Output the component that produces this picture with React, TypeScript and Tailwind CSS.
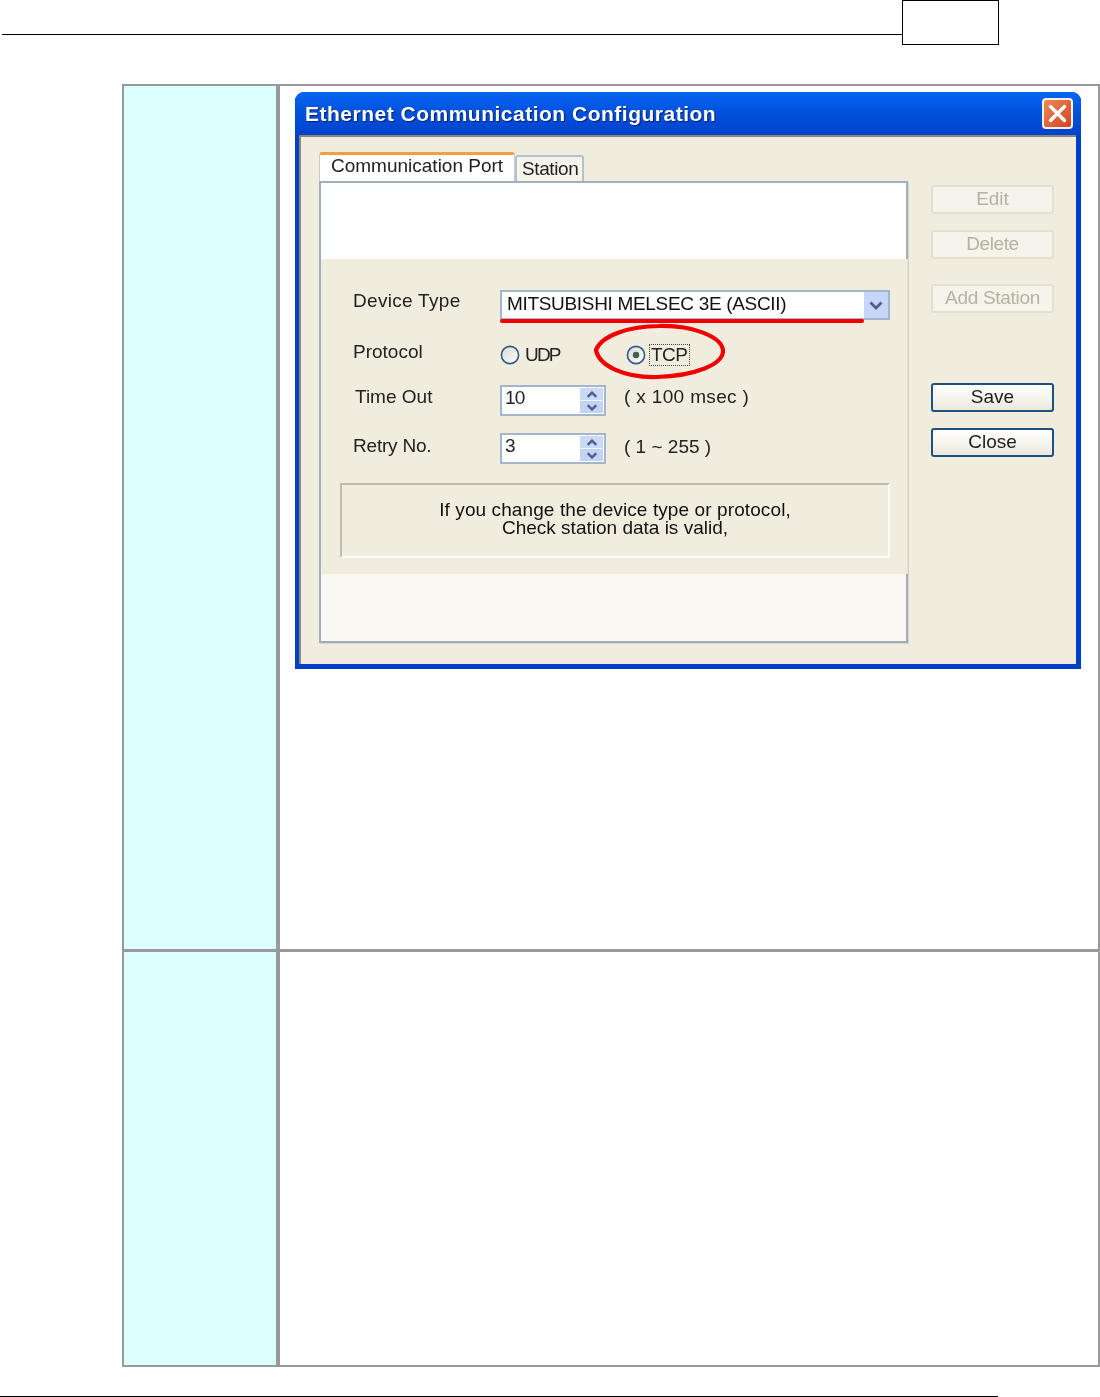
const Chevron = ({ up = false, small = false }: { up?: boolean; small?: boolean }) => (
  <svg
    width={small ? 12 : 14}
    height={small ? 7 : 9}
    viewBox="0 0 14 9"
    className={up ? 'rotate-180' : ''}
  >
    <path d="M1.5 1.5 L7 7 L12.5 1.5" fill="none" stroke="#4d6185" strokeWidth={small ? 3 : 2.8} />
  </svg>
);

const Radio = ({ checked = false }: { checked?: boolean }) => (
  <svg width="20" height="20" viewBox="0 0 20 20" className="shrink-0">
    <defs>
      <linearGradient id={checked ? 'radioOn' : 'radioOff'} x1="0" y1="0" x2="1" y2="1">
        <stop offset="0" stopColor="#dcd8cc" />
        <stop offset="1" stopColor="#ffffff" />
      </linearGradient>
    </defs>
    <circle cx="10" cy="10" r="8.6" fill={`url(#${checked ? 'radioOn' : 'radioOff'})`} stroke="#2f5a8c" strokeWidth="1.6" />
    {checked && <circle cx="10" cy="10" r="3.2" fill="#45604a" />}
  </svg>
);

const SpinBox = ({ value }: { value: string }) => (
  <div className="flex h-[31px] w-[106px] border-2 border-[#a3b6c9] bg-white">
    <span className="flex-1 pl-[3px] leading-[22px] tracking-[-0.8px]">{value}</span>
    <div className="my-[1px] mr-[1px] flex w-[23px] flex-col gap-[1px] bg-[#eef2fb]">
      <div className="flex flex-1 items-center justify-center bg-[#cbd9f6]">
        <Chevron up small />
      </div>
      <div className="flex flex-1 items-center justify-center bg-[#c3d3f6]">
        <Chevron small />
      </div>
    </div>
  </div>
);

const SideButton = ({ label, active = false, className = '' }: { label: string; active?: boolean; className?: string }) => (
  <div
    className={`flex h-[29px] w-[123px] items-center justify-center rounded-[3px] border-2 pb-[2px] ${
      active
        ? 'border-[#1c5180] bg-gradient-to-b from-white to-[#ece9dc] text-[#1d1d1d]'
        : 'border-[#e3e0d2] bg-[#f5f3ea] text-[#b5b3a3]'
    } ${className}`}
  >
    {label}
  </div>
);

const FormRow = ({ label, labelClass = '', children }: { label: string; labelClass?: string; children: React.ReactNode }) => (
  <div className="flex items-center pl-[32px]">
    <span className={`w-[147px] shrink-0 ${labelClass}`}>{label}</span>
    {children}
  </div>
);

const Dialog = () => (
  <div className="relative flex h-[577px] w-[786px] flex-col rounded-t-[9px] bg-[#0040c8] font-['Liberation_Sans',sans-serif] text-[19px] leading-[24px] text-[#222] blur-[0.4px]">
    <div className="flex h-[43px] shrink-0 items-center justify-between rounded-t-[9px] bg-gradient-to-b from-[#0a66f2] via-[#0050dc] to-[#0042cc] pl-[10px] pr-[8px]">
      <span className="text-[21px] font-bold tracking-[0.5px] text-white [text-shadow:1px_1px_1px_#0a1f6a]">
        Ethernet Communication Configuration
      </span>
      <div className="flex h-[31px] w-[31px] items-center justify-center rounded-[4px] border-2 border-[#f4f1ea] bg-gradient-to-br from-[#ec8a55] to-[#d2401a]">
        <svg width="21" height="21" viewBox="0 0 21 21">
          <path d="M3.5 3.5 L17.5 17.5 M17.5 3.5 L3.5 17.5" stroke="#ffffff" strokeWidth="3.4" strokeLinecap="round" />
        </svg>
      </div>
    </div>

    <div className="mb-[5px] ml-[4px] mr-[5px] flex flex-1 border-l-2 border-t-2 border-[#8a8778] bg-[#f0eddf]">
      <div className="ml-[18px] flex w-[589px] flex-col pt-[15px]">
        {/* tabs */}
        <div className="flex h-[29px] items-end">
          <div className="flex h-[29px] w-[196px] items-start rounded-t-[3px] border-t-[3px] border-x border-[#f0a040] border-x-[#c4cdd0] bg-white pl-[11px]">
            <span className="leading-[22px]">Communication Port</span>
          </div>
          <div className="flex h-[26px] w-[69px] items-center rounded-t-[3px] border-2 border-b-0 border-[#b2c1cc] bg-[#f6f4ea] pl-[5px] tracking-[-0.4px]">
            Station
          </div>
        </div>

        <div className="flex h-[462px] flex-col border-b-2 border-l-2 border-r-2 border-[#9fafbb] bg-white shadow-[1px_1px_0_#d8d5c5]">
          <div className="h-[78px] border-t-2 border-[#9fafbb] bg-white" />

          {/* form */}
          <div className="-mr-[2px] flex h-[315px] flex-col border-r border-[#e2dfd0] bg-[#f0eddf] pt-[31px]">
            <FormRow label="Device Type" labelClass="-mt-[8px] tracking-[0.3px]">
              <div className="flex h-[30px] w-[390px] border-2 border-[#a3b6c9] bg-white pl-[5px]">
                <span className="flex-1 leading-[24px] tracking-[-0.32px] text-[#111]">MITSUBISHI MELSEC 3E (ASCII)</span>
                <div className="flex w-[24px] items-center justify-center bg-[#c6d5fa]">
                  <Chevron />
                </div>
              </div>
            </FormRow>

            <div className="mt-[25px]">
              <FormRow label="Protocol" labelClass="-mt-[6px]">
                <div className="flex h-[20px] items-center">
                  <Radio />
                  <span className="ml-[5px] w-[101px] tracking-[-1.8px]">UDP</span>
                  <Radio checked />
                  <span className="ml-[3px] border border-dotted border-[#444] px-[1px] leading-[20px] tracking-[-0.5px]">TCP</span>
                </div>
              </FormRow>
            </div>

            <div className="mt-[20px]">
              <FormRow label="Time Out" labelClass="-mt-[7px] pl-[2px]">
                <SpinBox value="10" />
                <span className="-mt-[7px] ml-[18px] tracking-[0.35px]">( x 100 msec )</span>
              </FormRow>
            </div>

            <div className="mt-[17px]">
              <FormRow label="Retry No." labelClass="-mt-[5px] tracking-[-0.2px]">
                <SpinBox value="3" />
                <span className="-mt-[3px] ml-[18px]">( 1 ~ 255 )</span>
              </FormRow>
            </div>

            <div className="ml-[19px] mt-[19px] flex h-[75px] w-[550px] flex-col items-center border-2 border-b-[#fbfaf4] border-l-[#c0bdae] border-r-[#fbfaf4] border-t-[#c0bdae] pt-[16px] leading-[18px] text-[#111]">
              <span className="tracking-[0.1px]">If you change the device type or protocol,</span>
              <span>Check station data is valid,</span>
            </div>
          </div>

          <div className="flex-1 bg-[#f9f8f3]" />
        </div>
      </div>

      <div className="ml-[23px] flex w-[123px] flex-col pt-[48px]">
        <SideButton label="Edit" />
        <SideButton label="Delete" className="mt-[16px] tracking-[-0.4px]" />
        <SideButton label="Add Station" className="mt-[25px] tracking-[-0.3px]" />
        <SideButton label="Save" active className="mt-[70px]" />
        <SideButton label="Close" active className="mt-[16px]" />
      </div>
    </div>

    {/* red markup drawn over the screenshot */}
    <div className="absolute left-[205px] top-[227px] h-[4px] w-[364px] rounded-full bg-[#f00000]" />
    <svg className="absolute left-[298px] top-[231px]" width="134" height="58" viewBox="0 0 134 58">
      <path
        d="M3 27 C8 13 36 3 66 3 C98 2 128 13 130 27 C131 42 100 53 64 54 C32 55 6 43 3 27 Z"
        fill="none"
        stroke="#f00000"
        strokeWidth="4.2"
      />
    </svg>
  </div>
);

export default function App() {
  return (
    <div className="h-[1397px] w-[1100px] overflow-hidden bg-white">
      <header className="flex h-[45px] items-start pl-[2px]">
        <div className="h-[35px] w-[900px] border-b border-black" />
        <div className="h-[45px] w-[97px] border border-black" />
      </header>

      <div className="ml-[122px] mt-[39px] flex h-[1283px] w-[978px] flex-col border-2 border-[#999]">
        <div className="flex h-[866px] shrink-0 border-b-[3px] border-[#999]">
          <div className="w-[152px] shrink-0 border-r-4 border-[#999] bg-[#dcffff] box-content" />
          <div className="flex-1 pl-[15px] pt-[6px]">
            <Dialog />
          </div>
        </div>
        <div className="flex flex-1">
          <div className="w-[152px] shrink-0 border-r-4 border-[#999] bg-[#dcffff] box-content" />
          <div className="flex-1" />
        </div>
      </div>

      <div className="mt-[29px] h-px w-[998px] bg-black" />
    </div>
  );
}
